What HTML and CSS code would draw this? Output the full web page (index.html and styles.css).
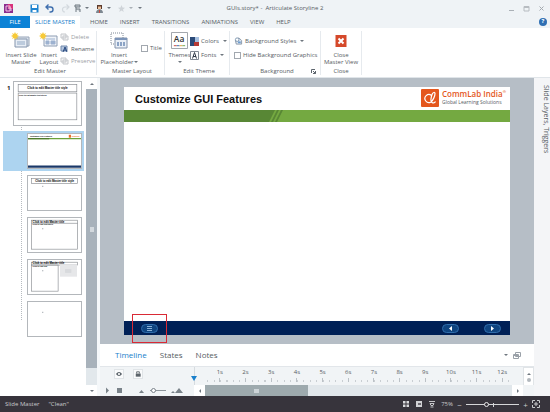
FILE: index.html
```
<!DOCTYPE html>
<html lang="en">
<head>
  <meta charset="UTF-8" />
  <title>GUIs.story* - Articulate Storyline 2</title>
  <link rel="stylesheet" href="styles.css">
</head>
<body>
  <header class="titlebar">
    <div class="quick">
      <svg class="app-icon" viewBox="0 0 9 9"><rect width="9" height="9" fill="#8a2c8e"/><rect x="4" width="5" height="5" fill="#d8327c"/><path d="M2 2h4v5h-4zM4 4h3v3" fill="none" stroke="#f3c3e4"/></svg>
      <button aria-label="Save"><svg viewBox="0 0 9 9"><path d="M.5.5h8v8h-8z" fill="#1c83cf"/><path d="M2 1h5v3h-5zM2.500 6h4v2h-4z" fill="#fff"/></svg></button>
      <button class="undo" aria-label="Undo"><svg viewBox="0 0 9 9"><path d="M3.500.5L1 3l2.500 2.500M1 3h4.500a2.500 2.500 0 0 1 0 5H4.500" fill="none" stroke="#3f6fae" stroke-width="1.400"/></svg></button>
      <button class="redo" aria-label="Redo"><svg viewBox="0 0 9 9"><path d="M5.500.5L8 3L5.500 5.500M8 3H4a2.500 2.500 0 0 0 0 5" fill="none" stroke="#d3d9de" stroke-width="1.200"/></svg></button>
      <button class="split" aria-label="Publish"><svg viewBox="0 0 9 9"><path d="M2 1h5v2H2zM3 3v5M3 5h4v3" fill="#cfd5da" stroke="#6f7980"/></svg><i class="caret"></i></button>
      <button class="split" aria-label="Character"><svg viewBox="0 0 9 9"><path d="M2 1h5v4H2z" fill="#5b3a2c"/><path d="M3 2.500h3v3H3z" fill="#eec19b"/><path d="M1 9c0-5 7-5 7 0z" fill="#7c8790"/><path d="M4 6h1v3H4z" fill="#c94a3d"/></svg><i class="caret"></i></button>
      <button class="split" aria-label="Favorites"><svg viewBox="0 0 9 9"><path d="M4.500 1l1 2.500 2.500.2-2 1.700.7 2.600-2.200-1.400L2.300 8 3 5.400 1 3.700l2.500-.2z" fill="#cfd4d9"/></svg><i class="caret pale"></i></button>
      <button class="more" aria-label="More commands"><i class="caret"></i></button>
    </div>
    <h1>GUIs.story* -&nbsp; Articulate Storyline 2</h1>
    <div class="window-buttons">
      <button aria-label="Minimize"><svg viewBox="0 0 7 7"><path d="M1 5.500h5" stroke="#aab0b6"/></svg></button>
      <button aria-label="Maximize"><svg viewBox="0 0 7 7"><path d="M1 1.500h5v4.500H1zM1 2.500h5" fill="none" stroke="#b7bcc1"/></svg></button>
      <button aria-label="Close"><svg viewBox="0 0 7 7"><path d="M1.500 1.500l4 4m0-4l-4 4" stroke="#a4aab0"/></svg></button>
    </div>
  </header>

  <nav class="tabs">
    <button class="file">FILE</button>
    <button class="active">SLIDE MASTER</button>
    <button>HOME</button>
    <button>INSERT</button>
    <button>TRANSITIONS</button>
    <button>ANIMATIONS</button>
    <button>VIEW</button>
    <button>HELP</button>
    <a class="help" href="#" aria-label="Help">?</a>
  </nav>

  <section class="ribbon">
    <div class="group edit-master">
      <div class="tools">
        <button class="big">
          <svg viewBox="0 0 20 17"><path d="M6 5h12v9H6z" fill="#dce3ec" stroke="#97a5b8"/><path d="M4 7h12v8H4z" fill="#e7edf5" stroke="#8495ad"/><path d="M6 9h8v4H6z" fill="#bccbdd"/><path d="M4 0l1 2 2-1-1 2 2 1-2 1 1 2-2-1-1 2-1-2-2 1 1-2-2-1 2-1-1-2 2 1z" fill="#f7ca38"/></svg>
          <span>Insert Slide<br>Master</span>
        </button>
        <button class="big">
          <svg viewBox="0 0 20 17"><path d="M5 4h13v10H5z" fill="#f0f3f8" stroke="#8d9db3"/><path d="M7 7h9M7 9h3v3H7zM12 9h4v3h-4z" fill="#9db2d0" stroke="#9db2d0"/><path d="M4 0l1 2 2-1-1 2 2 1-2 1 1 2-2-1-1 2-1-2-2 1 1-2-2-1 2-1-1-2 2 1z" fill="#f7ca38"/></svg>
          <span>Insert<br>Layout</span>
        </button>
        <div class="stack">
          <button class="small off"><svg viewBox="0 0 9 8"><path d="M1 1h5v4H1zM3 3h5v4H3z" fill="#f4f4f5" stroke="#c4c7cb"/></svg>Delete</button>
          <button class="small"><svg viewBox="0 0 9 8"><path d="M1 1h6v5H1z" fill="#b5c6de" stroke="#7089ad"/><path d="M3 7l2-5 2 5M4 5h2" fill="none" stroke="#25477e"/></svg>Rename</button>
          <button class="small off"><svg viewBox="0 0 9 8"><path d="M1 1h5v4H1zM3 3h5v4H3z" fill="#f4f4f5" stroke="#c4c7cb"/></svg>Preserve</button>
        </div>
      </div>
      <h2>Edit Master</h2>
    </div>

    <div class="group master-layout">
      <div class="tools">
        <button class="big">
          <svg viewBox="0 0 20 17"><path d="M2 1h12v11H2z" fill="none" stroke="#7f8894" stroke-dasharray="1 1"/><path d="M6 6h12v10H6z" fill="#e9eff7" stroke="#8292aa"/><path d="M6 6h12v2H6z" fill="#7c94b8"/><path d="M8 10h2v4H8zM11 10h2v4h-2zM14 10h2v4h-2z" fill="#8ba3c5"/></svg>
          <span>Insert<br>Placeholder<i class="caret"></i></span>
        </button>
        <label class="check"><input type="checkbox">Title</label>
      </div>
      <h2>Master Layout</h2>
    </div>

    <div class="group edit-theme">
      <div class="tools">
        <button class="big themes">
          <svg viewBox="0 0 18 18"><path d="M.5.5h17v17H.5z" fill="#fff" stroke="#9a9fa6"/><text x="3" y="11" class="aa">Aa</text><path d="M3 14.500h3" stroke="#cc4436"/><path d="M6 14.500h3" stroke="#3569ac"/><path d="M9 14.500h3" stroke="#e2a03b"/><path d="M12 14.500h3" stroke="#6aa84f"/></svg>
          <span>Themes<br><i class="caret"></i></span>
        </button>
        <div class="stack wide">
          <button class="small"><svg viewBox="0 0 9 9"><path d="M0 0h5v9H0z" fill="#2b4a78"/><path d="M5 0h4v5H5z" fill="#a7c0e0"/><path d="M4 5h5v4H4z" fill="#b63a35"/></svg>Colors<i class="caret"></i></button>
          <button class="small"><svg viewBox="0 0 9 9"><path d="M.5.5h8v8h-8z" fill="#fff" stroke="#828a94"/><path d="M2.500 7.500l2-6 2 6M3 5.500h3" fill="none" stroke="#333d4a"/></svg>Fonts<i class="caret"></i></button>
        </div>
      </div>
      <h2>Edit Theme</h2>
    </div>

    <div class="group background">
      <div class="tools">
        <div class="stack wide">
          <button class="small"><svg viewBox="0 0 9 9"><path d="M1 4l4-3 3 3v4H2z" fill="#dfe6ee" stroke="#8694a5"/><circle cx="3" cy="3" r="2" fill="#fff" stroke="#7790ac"/><path d="M4 5h3v2H4z" fill="#6a9bd0"/></svg>Background Styles<i class="caret"></i></button>
          <label class="check"><input type="checkbox">Hide Background Graphics</label>
        </div>
      </div>
      <h2>Background</h2>
      <button class="launcher" aria-label="Background options"><svg viewBox="0 0 5 5"><path d="M.5 4V.5H4M2 2l2.500 2.500M4.500 2v2.500H2" fill="none" stroke="#5d656d"/></svg></button>
    </div>

    <div class="group close-group">
      <div class="tools">
        <button class="big">
          <svg viewBox="0 0 20 17"><path d="M4.500 3h11v12h-11z" fill="#d5492b"/><path d="M7.500 6.500l5 5m0-5l-5 5" stroke="#fff" stroke-width="2"/></svg>
          <span>Close<br>Master View</span>
        </button>
      </div>
      <h2>Close</h2>
    </div>
  </section>

  <main>
    <aside class="masters">
      <ol>
        <li class="master"><b>1</b>
          <svg class="thumb" viewBox="0 0 204 132"><rect x="12" y="8" width="180" height="22" class="ph"/><text x="102" y="23" text-anchor="middle">Click to edit Master title style</text><rect x="12" y="34" width="180" height="82" class="ph"/><text x="14" y="43" class="sub">Click to edit Master text styles</text></svg>
        </li>
        <li class="selected">
          <svg class="thumb" viewBox="0 0 165 105"><text x="6" y="9" class="heavy">Customize GUI Features</text><rect x="127" y="2" width="7" height="9" fill="#e8702a"/><text x="136" y="9" class="brand">CommLab</text><path d="M0 12h165v4H0z" fill="#6ba33b"/><path d="M0 12h66v4H0z" fill="#4d7a2c"/><path d="M0 98h165v7H0z" fill="#1a3869"/></svg>
        </li>
        <li>
          <svg class="thumb" viewBox="0 0 165 108"><rect x="10" y="8" width="146" height="16" class="ph"/><text x="83" y="19" text-anchor="middle">Click to edit Master title style</text><rect x="43" y="31" width="4" height="4" class="dot"/></svg>
        </li>
        <li>
          <svg class="thumb" viewBox="0 0 165 108"><rect x="10" y="7" width="146" height="92" class="ph"/><path d="M10 17h146" class="ph"/><text x="13" y="15">Click to edit Master title</text><text x="13" y="23" class="sub">Click to edit text styles</text><rect x="43" y="32" width="4" height="4" class="dot"/></svg>
        </li>
        <li>
          <svg class="thumb" viewBox="0 0 165 108"><rect x="10" y="7" width="146" height="9" class="ph"/><rect x="10" y="16" width="84" height="83" class="ph"/><text x="13" y="14">Click to edit Master title</text><text x="13" y="22" class="sub">Click to edit text</text><rect x="100" y="15" width="54" height="38" fill="#e6e7e9"/><rect x="116" y="29" width="20" height="12" fill="#d8dadd"/><rect x="43" y="32" width="4" height="4" class="dot"/></svg>
        </li>
        <li>
          <svg class="thumb" viewBox="0 0 165 108"><rect x="43" y="31" width="4" height="4" class="dot"/></svg>
        </li>
      </ol>
      <div class="vscroll">
        <button aria-label="Scroll up"><i class="caret up"></i></button>
        <div class="bar"></div>
        <div class="track"></div>
        <button aria-label="Scroll down"><i class="caret"></i></button>
      </div>
    </aside>

    <section class="work">
      <div class="stage">
        <article class="slide">
          <div class="slide-head">
            <h3>Customize GUI Features</h3>
            <div class="brand-logo">
              <svg viewBox="0 0 18 18"><rect width="18" height="18" rx="1" fill="#e4571d"/><path d="M10.500 6.500a4 4 0 1 0-.5 6.500c2-1.500 4-6 4-8.500 0-1.500-2-1.500-3 1-1 3-1.500 7 0 8s3 0 3.500-1" fill="none" stroke="#fff" stroke-width="1.200"/></svg>
              <p><strong>CommLab India<sup>®</sup></strong><small>Global Learning Solutions</small></p>
            </div>
          </div>
          <div class="band"><svg viewBox="0 0 20 12"><path d="M0 0h8L2 12H0z" fill="#588735"/><path d="M10 0h2L6 12H4zM14 0h2l-6 12H8z" fill="#588735"/></svg></div>
          <div class="canvas"></div>
          <div class="slide-foot">
            <button class="pill menu" aria-label="Menu"><svg viewBox="0 0 15 7"><path d="M5 1.500h5M5 3.500h5M5 5.500h5" stroke="#8ab0d6"/></svg></button>
            <button class="pill" aria-label="Previous"><svg viewBox="0 0 15 7"><path d="M9 1v5L6 3.500z" fill="#fff"/></svg></button>
            <button class="pill" aria-label="Next"><svg viewBox="0 0 15 7"><path d="M6 1v5L9 3.500z" fill="#fff"/></svg></button>
            <span class="marker"></span>
          </div>
        </article>
      </div>

      <div class="timeline">
        <div class="panel-tabs">
          <button class="active">Timeline</button>
          <button>States</button>
          <button>Notes</button>
          <div class="panel-tools">
            <i class="caret"></i>
            <svg viewBox="0 0 8 8"><path d="M2.500 1.500h5v4h-5zM.5 3.500h5v4h-5zM.5 4.500h5" fill="#fff" stroke="#9aa1a8"/></svg>
          </div>
        </div>
        <div class="ruler-row">
          <div class="toggles">
            <button aria-label="Show"><svg viewBox="0 0 9 9"><path d="M1 4.500Q4.500 0 8 4.500Q4.500 9 1 4.500z" fill="#5c646b"/><circle cx="4.500" cy="4.500" r="1.200" fill="#fff"/></svg></button>
            <button aria-label="Lock"><svg viewBox="0 0 9 9"><path d="M2 4h5.500v3.500H2z" fill="#5c646b"/><path d="M3 4V2h3v2" fill="none" stroke="#5c646b"/></svg></button>
          </div>
          <div class="ruler">
            <span class="playhead"></span>
            <span>1s</span><span>2s</span><span>3s</span><span>4s</span><span>5s</span><span>6s</span><span>7s</span><span>8s</span><span>9s</span><span>10s</span><span>11s</span><span>12s</span>
          </div>
          <div class="ruler-scroll"><i class="caret up"></i><i class="knob"></i></div>
        </div>
        <div class="play-row">
          <div class="player">
            <button aria-label="Play"><svg viewBox="0 0 7 7"><path d="M2 .5v6L5 3.500z" fill="#7a838a"/></svg></button>
            <button aria-label="Stop"><svg viewBox="0 0 7 7"><path d="M1 1h5v5H1z" fill="#7a838a"/></svg></button>
            <svg class="hill" viewBox="0 0 7 7"><path d="M1 6l2.500-3L6 6z" fill="#7a838a"/></svg>
            <input type="range" aria-label="Timeline zoom" value="5">
            <svg class="hills" viewBox="0 0 12 7"><path d="M0 6l2-2 2 2zM4 6l4-5 4 5z" fill="#7a838a"/></svg>
          </div>
          <div class="hscroll">
            <button aria-label="Scroll left"><i class="caret left"></i></button>
            <div class="bar"></div>
            <div class="track"></div>
            <button aria-label="Scroll right"><i class="caret right"></i></button>
          </div>
        </div>
      </div>
    </section>

    <aside class="dock"><span>Slide Layers, Triggers</span></aside>
  </main>

  <footer class="status">
    <span>Slide Master</span>
    <span>"Clean"</span>
    <div class="view">
      <button aria-label="Story view"><svg viewBox="0 0 8 8"><path d="M1 1h2.500v2.500H1zM4.500 1H7v2.500H4.500zM1 4.500h2.500V7H1zM4.500 4.500H7V7H4.500z" fill="#d9dadc"/></svg></button>
      <button aria-label="Slide view"><svg viewBox="0 0 8 8"><path d="M1 1h6v6H1z" fill="#d0d1d4"/><path d="M3 3h3v2H3z" fill="#6b6870"/></svg></button>
      <button aria-label="Preview"><svg viewBox="0 0 8 8"><path d="M1 1.500h6M2 3.500h4L5 5.500H3zM2.500 7h3" fill="none" stroke="#c4c5c8"/></svg></button>
      <output>75%</output>
      <button class="step" aria-label="Zoom out">−</button>
      <input type="range" aria-label="Zoom" value="37">
      <button class="step" aria-label="Zoom in">+</button>
      <button aria-label="Fit"><svg viewBox="0 0 8 8"><path d="M.5 3V.5H3M5 .5h2.500V3M7.500 5v2.500H5M3 7.500H.5V5M3 3h2v2H3z" fill="none" stroke="#c9cacc"/></svg></button>
    </div>
  </footer>
</body>
</html>
```
FILE: styles.css
```
* {
  box-sizing: border-box;
}
body {
  display: flex;
  flex-direction: column;
  height: 100vh;
  margin: 0;
  overflow: hidden;
  font-family: "Open Sans", "Noto Sans", sans-serif;
  font-size: 6px;
  line-height: 7px;
  color: #565c63;
  background: #fff;
}
h1, h2, h3, p, ol {
  margin: 0;
  padding: 0;
  font-size: 6px;
  font-weight: normal;
}
button {
  margin: 0;
  padding: 0;
  border: 0;
  background: none;
  font: inherit;
  color: inherit;
}
svg {
  display: block;
  flex: none;
}
input {
  margin: 0;
}
.caret {
  display: inline-block;
  flex: none;
  width: 4px;
  border: 2px solid transparent;
  border-top-color: #6f777f;
  border-bottom: 0;
}
.caret.pale { border-top-color: #a9b0b6; }
.caret.up { transform: rotate(180deg); }
.caret.left { transform: rotate(90deg); }
.caret.right { transform: rotate(-90deg); }

/* title bar */
.titlebar {
  display: grid;
  grid-template-columns: 1fr auto 1fr;
  align-items: center;
  height: 16px;
  background: #eff3f6;
}
.quick {
  display: flex;
  align-items: center;
  gap: 6px;
  padding-left: 4px;
}
.quick svg {
  width: 9px;
  height: 9px;
}
.app-icon {
  margin-right: 11px;
}
.redo { margin-left: 1px; }
.split {
  display: flex;
  align-items: center;
  gap: 3px;
}
.redo + .split { margin-left: -3px; }
.more {
  display: flex;
  margin-left: -1px;
}
.window-buttons {
  display: flex;
  justify-content: flex-end;
  gap: 8px;
  padding-right: 5px;
}
.window-buttons svg {
  width: 7px;
  height: 7px;
}

/* ribbon tabs */
.tabs {
  display: flex;
  height: 12px;
  background: #eff3f6;
}
.tabs button {
  padding: 0 6px;
}
.tabs .file {
  width: 30px;
  padding: 0;
  background: #0c82d6;
  color: #fff;
}
.tabs .active {
  width: 50px;
  margin-right: 4px;
  padding: 0;
  background: #fff;
  color: #1a80cb;
}
.help {
  width: 8px;
  height: 8px;
  margin: 2px 3px 0 auto;
  border-radius: 50%;
  background: #2f6fb3;
  color: #fff;
  text-align: center;
  text-decoration: none;
  font-weight: bold;
}

/* ribbon */
.ribbon {
  display: flex;
  height: 50px;
  padding-top: 3px;
  border-bottom: 1px solid #e0e5e9;
}
.group {
  position: relative;
  display: flex;
  flex-direction: column;
  height: 44px;
  border-right: 1px solid #e6eaee;
}
.group h2 {
  height: 7px;
  text-align: center;
}
.tools {
  display: flex;
  height: 37px;
}
.edit-master { width: 97px; padding-left: 4px; }
.master-layout { width: 68px; padding-left: 3px; }
.edit-theme { width: 65px; padding-left: 4px; }
.background { width: 91px; padding-left: 4px; }
.close-group { width: 41px; }
.close-group .big { width: 100%; }
.big {
  display: flex;
  flex-direction: column;
  align-items: center;
  width: 34px;
  padding-top: 1px;
  white-space: nowrap;
}
.big + .big {
  width: 22px;
}
.big svg {
  width: 20px;
  height: 17px;
  margin-bottom: 3px;
}
.master-layout .big { width: 38px; }
.big.themes { width: 21px; }
.themes svg { width: 17px; }
.aa {
  font-size: 9px;
  font-weight: 600;
  fill: #333;
}
.big .caret {
  vertical-align: middle;
}
.stack {
  display: flex;
  flex-direction: column;
  gap: 4px;
  padding-top: 2px;
}
.small, .check {
  display: flex;
  align-items: center;
  gap: 2px;
  height: 8px;
  white-space: nowrap;
}
.small svg {
  width: 9px;
  height: 8px;
}
.small .caret { margin-left: 2px; }
.off { color: #9ba0a6; }
.stack.wide {
  gap: 6px;
  padding-top: 6px;
}
.edit-theme .small svg { height: 9px; }
.tools > .check { margin: 13px 0 0 3px; }
.check input {
  appearance: none;
  width: 7px;
  height: 7px;
  border: 1px solid #a2a8af;
  background: #fff;
}
.launcher {
  position: absolute;
  right: 4px;
  bottom: 1px;
}
.launcher svg {
  width: 5px;
  height: 5px;
}

main {
  display: flex;
  flex: 1;
  min-height: 0;
}

/* slide master list */
.masters {
  display: flex;
  width: 100px;
  border-right: 3px solid #f5f8fa;
}
.masters ol {
  position: relative;
  flex: 1;
  padding-top: 3px;
  list-style: none;
}
.masters ol::before {
  content: "";
  position: absolute;
  top: 49px;
  bottom: 76px;
  left: 21px;
  border-left: 1px dotted #b5babf;
}
.masters li {
  position: relative;
  display: flex;
  justify-content: flex-end;
  margin: 0 2px 2px 3px;
  padding: 2px 2px 2px 0;
}
.masters .master {
  justify-content: space-between;
  margin-bottom: 3px;
  padding: 0 2px 2px 4px;
  color: #222;
}
.masters b {
  padding-top: 4px;
}
.masters .selected {
  background: #add4f0;
}
.thumb {
  width: 55px;
  height: 36px;
  border: 1px solid #b3b7bb;
  background: #fff;
  font-family: "Liberation Sans", Arial, sans-serif;
  font-size: 9px;
  font-weight: bold;
}
.master .thumb {
  width: 69px;
  height: 45px;
}
.thumb .ph {
  fill: none;
  stroke: #85898e;
  stroke-width: 2;
}
.thumb .sub { font-size: 6px; }
.thumb .dot { fill: #b4b9be; }
.thumb .heavy { font-size: 6px; }
.thumb .brand { font-size: 5px; fill: #e8702a; }

.vscroll {
  display: flex;
  flex-direction: column;
  width: 11px;
  background: #e2e8ec;
}
.vscroll button {
  display: flex;
  align-items: center;
  justify-content: center;
  height: 11px;
  background: #fff;
}
.vscroll .bar {
  flex: 280;
  background: #a8b2bb;
}
.vscroll .bar::after {
  content: "";
  display: block;
  width: 4px;
  height: 5px;
  margin: 138px auto 0;
  background: #d3d9de;
}
.vscroll .track { flex: 17; }

/* slide */
.work {
  display: flex;
  flex: 1;
  flex-direction: column;
  min-width: 0;
}
.stage {
  display: flex;
  flex: 1;
  padding: 9px 24px;
  background: #b6bec6;
}
.slide {
  display: flex;
  flex: 1;
  flex-direction: column;
  background: #fff;
}
.slide-head {
  display: flex;
  justify-content: space-between;
  height: 23px;
  padding: 2px 4px 0 11px;
}
.slide-head h3 {
  font-family: "Liberation Sans", Arial, sans-serif;
  font-size: 11px;
  font-weight: bold;
  line-height: 20px;
  color: #111;
}
.brand-logo {
  display: flex;
  gap: 3px;
}
.brand-logo svg {
  width: 18px;
  height: 18px;
}
.brand-logo p {
  display: flex;
  flex-direction: column;
  white-space: nowrap;
}
.brand-logo strong {
  font-size: 8px;
  font-weight: 600;
  line-height: 10px;
  color: #e4571d;
}
.brand-logo sup {
  font-size: 4px;
  line-height: 0;
}
.brand-logo small {
  font-size: 5px;
  line-height: 7px;
}
.band {
  display: flex;
  height: 12px;
  background: #74a941;
}
.band::before {
  content: "";
  width: 37%;
  background: #588735;
}
.band svg {
  width: 20px;
  height: 12px;
}
.canvas { flex: 1; }
.slide-foot {
  position: relative;
  display: flex;
  align-items: center;
  gap: 25px;
  height: 14px;
  padding: 0 9px 0 17px;
  background: #002056;
}
.pill {
  width: 17px;
  height: 9px;
  border: 1px solid #2f6cab;
  border-radius: 5px;
  background: #0f4480;
}
.pill svg {
  width: 15px;
  height: 7px;
}
.menu { margin-right: auto; }
.marker {
  position: absolute;
  left: 8px;
  top: -7px;
  width: 35px;
  height: 29px;
  border: 1px solid #d92a35;
}

/* timeline */
.panel-tabs {
  display: flex;
  align-items: center;
  gap: 13px;
  height: 22px;
  padding: 0 13px 0 15px;
  font-size: 8px;
  line-height: 10px;
}
.panel-tabs .active { color: #1a80cb; }
.panel-tools {
  display: flex;
  align-items: center;
  gap: 5px;
  margin-left: auto;
}
.panel-tools svg {
  width: 8px;
  height: 8px;
}
.ruler-row {
  display: flex;
  height: 19px;
  border-top: 1px solid #e2e6ea;
  background: #f1f4f6;
}
.toggles {
  display: flex;
  align-items: center;
  gap: 9px;
  width: 94px;
  padding: 0 0 4px 14px;
}
.toggles button {
  border: 1px solid #e0e4e7;
  background: #fafbfc;
}
.toggles svg {
  width: 8px;
  height: 8px;
}
.ruler {
  position: relative;
  display: flex;
  flex: 1;
  padding: 0 8px 0 12px;
  border-left: 1px solid #d6dbdf;
}
.ruler span {
  flex: 1;
  padding-top: 2px;
  text-align: center;
  background:
    linear-gradient(#bbc1c6, #bbc1c6) 50% 11px / 1px 4px no-repeat,
    repeating-linear-gradient(90deg, #c9ced2 0 1px, transparent 1px 25%) 0 13px / 100% 2px no-repeat;
}
.ruler .playhead {
  position: absolute;
  left: -4px;
  top: 9px;
  padding: 0;
  border: 3px solid transparent;
  border-top: 5px solid #1a80cb;
  border-bottom: 0;
  background: none;
}
.ruler-scroll {
  display: flex;
  flex-direction: column;
  align-items: center;
  gap: 3px;
  width: 11px;
  padding-top: 5px;
  border: 1px solid #e0e4e7;
  border-bottom: 0;
  background: #fff;
}
.knob {
  width: 4px;
  height: 4px;
  border-radius: 2px;
  background: #b3b9be;
}
.play-row {
  display: flex;
  height: 11px;
  background: #f1f4f6;
}
.player {
  display: flex;
  align-items: center;
  gap: 5px;
  width: 94px;
  padding-left: 4px;
}
.player svg {
  width: 7px;
  height: 7px;
}
.player .hill { margin-left: 10px; }
.player .hills { width: 12px; }
input[type="range"] {
  appearance: none;
  width: 16px;
  height: 7px;
  background: linear-gradient(#8d959b, #8d959b) center / 100% 1px no-repeat;
}
input[type="range"]::-webkit-slider-thumb {
  appearance: none;
  width: 5px;
  height: 5px;
  border: 1px solid #7a838a;
  border-radius: 50%;
  background: #fff;
}
.hscroll {
  display: flex;
  flex: 1;
  margin-right: 11px;
}
.hscroll button {
  display: flex;
  align-items: center;
  justify-content: center;
  width: 11px;
  background: #fff;
}
.hscroll .bar {
  display: flex;
  align-items: center;
  justify-content: center;
  flex: 103;
  background: #9eaaae;
}
.hscroll .bar::after {
  content: "";
  width: 5px;
  height: 4px;
  background: #cdd4d8;
}
.hscroll .track {
  flex: 204;
  background: #e1e7eb;
}

.dock {
  width: 16px;
  padding: 7px 0 0 4px;
  background: #f4f5f7;
  font-size: 7px;
  line-height: 8px;
  writing-mode: vertical-rl;
}

/* status bar */
.status {
  display: flex;
  align-items: center;
  gap: 9px;
  height: 16px;
  padding: 0 10px 0 5px;
  background: #37343c;
  color: #c9c9cc;
}
.view {
  display: flex;
  align-items: center;
  gap: 5px;
  margin-left: auto;
}
.view svg {
  width: 8px;
  height: 8px;
}
.view input[type="range"] {
  width: 53px;
  background:
    linear-gradient(#d5d6d8, #d5d6d8) 27px 2px / 1px 4px no-repeat,
    linear-gradient(#d5d6d8, #d5d6d8) center / 100% 1px no-repeat;
}
.view input[type="range"]::-webkit-slider-thumb {
  border-color: #e6e6e8;
  background: #37343c;
}
.step {
  width: 5px;
  margin: 0 -1px;
  font-size: 8px;
}
```
